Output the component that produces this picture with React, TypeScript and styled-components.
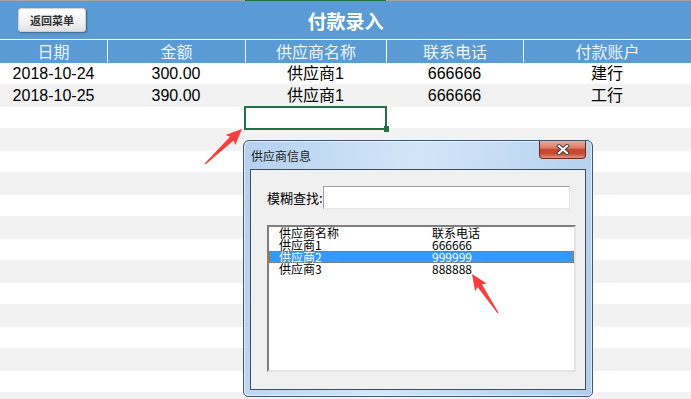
import React from 'react'
import styled, { createGlobalStyle } from 'styled-components'

const GlobalStyle = createGlobalStyle`
  html, body {
    margin: 0;
    padding: 0;
    background: #fff;
  }
  body {
    font-family: 'Liberation Sans', 'Noto Sans CJK SC', sans-serif;
  }
`

const COLUMNS = '107px 138px 141px 137px 1fr'

const Sheet = styled.div`
  position: relative;
  width: 691px;
  height: 399px;
  overflow: hidden;
  background: #fff;
`

const TopEdge = styled.div`
  display: grid;
  grid-template-columns: 245px 141px 1fr;
  height: 1px;
  background: #a6a6a6;
`

const TopMark = styled.div`
  grid-column: 2;
  background: #217346;
`

const TitleBar = styled.header`
  display: grid;
  grid-template-columns: 1fr auto 1fr;
  align-items: center;
  height: 38px;
  padding: 0 18px;
  background: #5b9bd5;
`

const BackButton = styled.button`
  justify-self: start;
  width: 68px;
  height: 24px;
  padding: 0;
  border: 1px solid #cfcfcf;
  border-radius: 3px;
  background: linear-gradient(#ffffff, #f3f3f3 55%, #e2e2e2);
  box-shadow: 1px 1px 2px rgba(0, 0, 0, 0.35);
  color: #333;
  font-family: 'Noto Sans CJK SC', sans-serif;
  font-size: 11px;
  font-weight: 700;
`

const Title = styled.h1`
  margin: 0;
  color: #fff;
  font-family: 'Noto Sans CJK SC', sans-serif;
  font-size: 19px;
  font-weight: 700;
`

const HeaderRow = styled.div`
  display: grid;
  grid-template-columns: ${COLUMNS};
  height: 23px;
  border-top: 1px solid #fff;
  background: #5b9bd5;
`

const HeaderCell = styled.div`
  border-left: 1px solid #fff;
  color: #eef5fc;
  font-family: 'Noto Sans CJK SC', sans-serif;
  font-size: 16px;
  line-height: 23px;
  text-align: center;

  &:first-child {
    border-left: none;
  }
`

const DataRow = styled.div<{ $odd: boolean }>`
  display: grid;
  grid-template-columns: ${COLUMNS};
  height: ${(p) => (p.$odd ? 23 : 21)}px;
  background: ${(p) => (p.$odd ? '#f2f2f2' : '#fff')};
`

const Cell = styled.div<{ $active?: boolean }>`
  position: relative;
  display: flex;
  align-items: center;
  justify-content: center;
  color: #000;
  font-size: 16px;
  line-height: 18px;

  ${(p) =>
    p.$active &&
    `
    &::after {
      content: '';
      position: absolute;
      top: -1px;
      left: -1px;
      right: -1px;
      bottom: -2px;
      border: 2px solid #217346;
    }
  `}
`

const FillHandle = styled.span`
  position: absolute;
  right: -3px;
  bottom: -4px;
  width: 5px;
  height: 6px;
  background: #217346;
  z-index: 1;
`

const Dialog = styled.div`
  position: absolute;
  left: 243px;
  top: 140px;
  width: 350px;
  height: 257px;
  box-sizing: border-box;
  display: flex;
  flex-direction: column;
  padding: 0 6px 6px;
  border: 1px solid #44566a;
  border-radius: 6px 6px 5px 5px;
  background: linear-gradient(100deg, #b4d0ee, #d3e6f8 45%, #c2daf3 70%, #afcdec);
  box-shadow: inset 0 0 0 1px rgba(255, 255, 255, 0.55);
`

const DialogTitle = styled.div`
  display: flex;
  justify-content: space-between;
  height: 28px;
`

const DialogCaption = styled.span`
  padding-left: 1px;
  color: #1e1e1e;
  font-family: 'Noto Sans CJK SC', sans-serif;
  font-size: 12px;
  line-height: 30px;
`

const CloseButton = styled.div`
  display: flex;
  align-items: center;
  justify-content: center;
  width: 47px;
  height: 18px;
  box-sizing: border-box;
  border: 1px solid #6e2a20;
  border-top: none;
  border-radius: 0 0 4px 4px;
  background: linear-gradient(#e9aa9a 0%, #dc7c66 40%, #c5432d 52%, #cc4a33 75%, #e39580 100%);
`

const Client = styled.div`
  flex: 1;
  display: flex;
  flex-direction: column;
  border: 1px solid #3d4e61;
  background: #f0f0f0;
`

const SearchRow = styled.div`
  display: flex;
  align-items: center;
  padding: 16px 0 0 16px;
`

const SearchLabel = styled.span`
  width: 56px;
  color: #000;
  font-family: 'Noto Sans CJK SC', sans-serif;
  font-size: 13px;
`

const SearchInput = styled.div`
  width: 247px;
  height: 23px;
  box-sizing: border-box;
  border: 1px solid;
  border-color: #a0a0a0 #e3e3e3 #e3e3e3 #a0a0a0;
  background: #fff;
`

const ListBox = styled.div`
  width: 309px;
  height: 147px;
  margin: 16px 0 0 16px;
  box-sizing: border-box;
  border: 2px solid;
  border-color: #7f7f7f #e3e3e3 #e3e3e3 #7f7f7f;
  background: #fff;
`

const ListRow = styled.div<{ $selected?: boolean }>`
  display: grid;
  grid-template-columns: 153px 1fr;
  height: 12px;
  box-sizing: border-box;
  padding-left: 10px;
  color: ${(p) => (p.$selected ? '#fff' : '#000')};
  background: ${(p) => (p.$selected ? '#3399ff' : 'transparent')};
  outline: ${(p) => (p.$selected ? '1px dotted #b06a10' : 'none')};
  outline-offset: -1px;
  font-family: 'Noto Sans CJK SC', sans-serif;
  font-size: 12px;
  line-height: 12px;
  white-space: nowrap;
`

const ListText = styled.span`
  display: block;
  height: 12px;
  line-height: 12px;
`

const Arrows = styled.svg`
  position: absolute;
  left: 0;
  top: 0;
  pointer-events: none;
`

type Point = [number, number]

const arrowPoints = (tail: Point, tip: Point): string => {
  const dx = tip[0] - tail[0]
  const dy = tip[1] - tail[1]
  const len = Math.hypot(dx, dy)
  const ux = dx / len
  const uy = dy / len
  const nx = -uy
  const ny = ux
  const at = (d: number, w: number): string =>
    `${(tail[0] + ux * d + nx * w).toFixed(1)},${(tail[1] + uy * d + ny * w).toFixed(1)}`
  const base = len - 14
  return [
    at(0, 0.6),
    at(base, 2.6),
    at(base - 2, 7),
    at(len, 0),
    at(base - 2, -7),
    at(base, -2.6),
    at(0, -0.6),
  ].join(' ')
}

const entries = [
  { date: '2018-10-24', amount: '300.00', supplier: '供应商1', phone: '666666', account: '建行' },
  { date: '2018-10-25', amount: '390.00', supplier: '供应商1', phone: '666666', account: '工行' },
]

const headers = ['日期', '金额', '供应商名称', '联系电话', '付款账户']

const suppliers = [
  { name: '供应商1', phone: '666666' },
  { name: '供应商2', phone: '999999' },
  { name: '供应商3', phone: '888888' },
]

const App = () => {
  const rows = Array.from({ length: 16 }, (_, i) => entries[i])

  return (
    <Sheet>
      <GlobalStyle />
      <TopEdge>
        <TopMark />
      </TopEdge>
      <TitleBar>
        <BackButton>返回菜单</BackButton>
        <Title>付款录入</Title>
      </TitleBar>
      <HeaderRow>
        {headers.map((h) => (
          <HeaderCell key={h}>{h}</HeaderCell>
        ))}
      </HeaderRow>
      {rows.map((row, i) => (
        <DataRow key={i} $odd={i % 2 === 1}>
          <Cell>{row?.date}</Cell>
          <Cell>{row?.amount}</Cell>
          <Cell $active={i === 2}>
            {row?.supplier}
            {i === 2 && <FillHandle />}
          </Cell>
          <Cell>{row?.phone}</Cell>
          <Cell>{row?.account}</Cell>
        </DataRow>
      ))}

      <Dialog>
        <DialogTitle>
          <DialogCaption>供应商信息</DialogCaption>
          <CloseButton>
            <svg width="14" height="11" viewBox="0 0 14 11">
              <path d="M3 2 L11 9 M11 2 L3 9" stroke="#3b3b3b" strokeWidth="4" strokeLinecap="square" />
              <path d="M3 2 L11 9 M11 2 L3 9" stroke="#fff" strokeWidth="2.2" strokeLinecap="square" />
            </svg>
          </CloseButton>
        </DialogTitle>
        <Client>
          <SearchRow>
            <SearchLabel>模糊查找:</SearchLabel>
            <SearchInput />
          </SearchRow>
          <ListBox>
            <ListRow>
              <ListText>供应商名称</ListText>
              <ListText>联系电话</ListText>
            </ListRow>
            {suppliers.map((s, i) => (
              <ListRow key={s.name} $selected={i === 1}>
                <ListText>{s.name}</ListText>
                <ListText>{s.phone}</ListText>
              </ListRow>
            ))}
          </ListBox>
        </Client>
      </Dialog>

      <Arrows width="691" height="399" viewBox="0 0 691 399">
        <polygon points={arrowPoints([205, 164], [242, 129])} fill="#ff3a3a" />
        <polygon points={arrowPoints([498, 313], [472, 274])} fill="#ff3a3a" />
      </Arrows>
    </Sheet>
  )
}

export default App
